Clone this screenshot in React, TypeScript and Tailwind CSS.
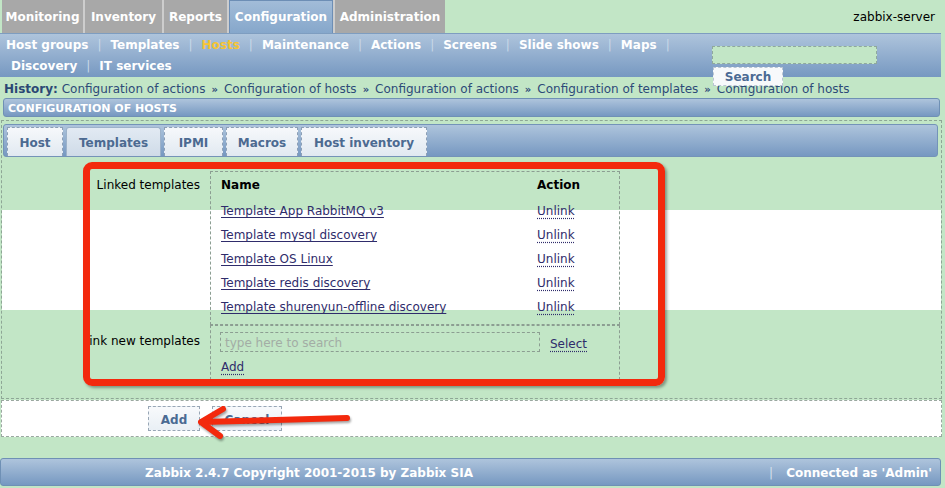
import React from "react";

const font = "font-['DejaVu_Sans',Verdana,sans-serif]";
const barBg = "bg-[linear-gradient(to_bottom,#aec4dc,#7698c1)]";

const mainTabs = [
  { label: "Monitoring", w: "w-[81px]" },
  { label: "Inventory", w: "w-[77px]" },
  { label: "Reports", w: "w-[63px]" },
  { label: "Configuration", w: "w-[104px]", active: true },
  { label: "Administration", w: "w-[110px]" },
];

const subMenu1 = ["Host groups", "Templates", "Hosts", "Maintenance", "Actions", "Screens", "Slide shows", "Maps"];
const subMenu2 = ["Discovery", "IT services"];

const history = [
  "Configuration of actions",
  "Configuration of hosts",
  "Configuration of actions",
  "Configuration of templates",
  "Configuration of hosts",
];

const formTabs = [
  { label: "Host", w: "w-[56px]" },
  { label: "Templates", w: "w-[95px]", active: true },
  { label: "IPMI", w: "w-[59px]" },
  { label: "Macros", w: "w-[72px]" },
  { label: "Host inventory", w: "w-[126px]" },
];

const templates = [
  "Template App RabbitMQ v3",
  "Template mysql discovery",
  "Template OS Linux",
  "Template redis discovery",
  "Template shurenyun-offline discovery",
];

function Sep() {
  return <span className="mx-[9px] font-normal text-[#c9d8e8]">|</span>;
}

function Menu({ items, last }: { items: string[]; last?: boolean }) {
  return (
    <>
      {items.map((item, i) => (
        <React.Fragment key={item}>
          <span className={item === "Hosts" ? "text-[#f7c434]" : "text-white"}>{item}</span>
          {(i < items.length - 1 || last) && <Sep />}
        </React.Fragment>
      ))}
    </>
  );
}

export default function App() {
  return (
    <div className={`relative w-[945px] h-[488px] overflow-hidden bg-[#c2e6c6] text-[12px] text-black ${font}`}>
      {/* main tabs */}
      <div className="flex h-[33px] items-start pl-[2px]">
        <div className="flex gap-[2px] bg-[#cdcdcd]">
          {mainTabs.map((t) => (
            <div
              key={t.label}
              className={`${t.w} h-[33px] flex items-center justify-center font-bold text-white ${
                t.active
                  ? "border border-b-0 border-[#6d8eb5] bg-[linear-gradient(to_bottom,#a2bcd8,#86a7cb)]"
                  : "bg-[#a8a8a8]"
              }`}
            >
              {t.label}
            </div>
          ))}
        </div>
        <div className="ml-auto mr-[10px] mt-[10px] leading-[14px]">zabbix-server</div>
      </div>

      {/* sub menu */}
      <div className={`relative w-[941px] h-[44px] border-t border-[#7e9dc0] ${barBg} pt-[1px] font-bold leading-[21px]`}>
        <div className="pl-[6px]">
          <Menu items={subMenu1} last />
        </div>
        <div className="pl-[11px]">
          <Menu items={subMenu2} />
        </div>
        <div className="absolute left-[712px] top-[12px] w-[165px] h-[18px] border border-dashed border-[#8fa89c] bg-[#c2e6c6]" />
        <div className="absolute z-10 left-[713px] top-[33px] w-[70px] h-[19px] border border-dashed border-[#b9c5d2] bg-[#f7f9fb] text-center text-[#4b6a93] leading-[19px]">
          Search
        </div>
      </div>

      {/* history */}
      <div className="h-[21px] pl-[4px] pt-[3px] leading-[18px] text-[#2d4a78]">
        <span className="font-bold text-[#2b4874]">History:</span>{" "}
        {history.map((h, i) => (
          <React.Fragment key={i}>
            <span>{h}</span>
            {i < history.length - 1 && <span className="mx-[6px] font-bold text-[10px]">»</span>}
          </React.Fragment>
        ))}
      </div>

      {/* page header */}
      <div className={`ml-[3px] w-[937px] h-[19px] rounded-[3px] border border-[#6f90b5] ${barBg} pl-[4px] text-[11px] font-bold leading-[19px] text-white`}>
        CONFIGURATION OF HOSTS
      </div>

      {/* form */}
      <div className="relative mt-[3px] ml-[1px] w-[941px] border border-dashed border-[#8ea696] pl-[1px] pt-[3px]">
        <div className={`w-[935px] h-[33px] rounded-[3px] border border-[#7493b8] ${barBg} flex items-end gap-[3px] pl-[3px]`}>
          {formTabs.map((t) => (
            <div
              key={t.label}
              className={`${t.w} h-[29px] pt-[2px] flex items-center justify-center font-bold text-[#4c6a91] ${
                t.active
                  ? "rounded-t-[3px] border border-b-0 border-[#9db2ca] bg-[linear-gradient(to_bottom,#e2eaf3,#cfdbe8)]"
                  : "border border-b-0 border-dashed border-[#8c9fb6] bg-[linear-gradient(to_bottom,#f6f8fb,#e1e9f1)]"
              }`}
            >
              {t.label}
            </div>
          ))}
        </div>

        <div className="h-[241px] -ml-[1px] pt-[14px] bg-[linear-gradient(to_bottom,#c2e6c6_53px,#ffffff_53px,#ffffff_153px,#c2e6c6_153px)]">
          {/* linked templates */}
          <div className="flex items-start">
            <div className="w-[198px] pt-[2px] text-right leading-[24px]">Linked templates</div>
            <div className="ml-[10px] w-[410px] border border-dashed border-[#8c9e92] pl-[10px] pb-[6px]">
              <div className="flex h-[24px] mb-[2px] leading-[26px] font-bold">
                <div className="w-[316px]">Name</div>
                <div>Action</div>
              </div>
              {templates.map((t) => (
                <div key={t} className="flex h-[24px] leading-[26px]">
                  <div className="w-[316px]">
                    <span className="text-[#2f2c6b] underline underline-offset-[2px]">{t}</span>
                  </div>
                  <div>
                    <span className="text-[#2f2c6b] underline decoration-dotted underline-offset-[3px]">Unlink</span>
                  </div>
                </div>
              ))}
            </div>
          </div>

          {/* link new templates */}
          <div className="flex items-start">
            <div className="w-[198px] pt-[4px] text-right leading-[24px]">Link new templates</div>
            <div className="ml-[10px] w-[410px] border border-dashed border-[#8c9e92] pl-[9px] pt-[5px]">
              <div className="flex items-center">
                <div className="w-[320px] h-[20px] border border-dashed border-[#8c9e92] pl-[4px] leading-[20px] text-[#a3ada5]">
                  type here to search
                </div>
                <span className="ml-[10px] mt-[4px] text-[#2f2c6b] underline decoration-dotted underline-offset-[3px]">Select</span>
              </div>
              <div className="mt-[2px] h-[24px] pl-[1px] leading-[25px]">
                <span className="text-[#2f2c6b] underline decoration-dotted underline-offset-[3px]">Add</span>
              </div>
            </div>
          </div>
        </div>

        {/* annotation box */}
        <div className="absolute left-[81px] top-[41px] w-[582px] h-[224px] rounded-[9px] border-[7px] border-[#f3290d] shadow-[2px_2px_3px_rgba(0,0,0,0.35)]" />
      </div>

      {/* buttons */}
      <div className="mt-[1px] ml-[1px] w-[941px] h-[37px] border border-dashed border-[#9aa8a0] bg-white flex pl-[146px] pt-[5px]">
        <div className="w-[52px] h-[25px] pt-[2px] border border-dashed border-[#98a6b5] bg-[linear-gradient(to_bottom,#f8fafc,#e9eff5)] text-center font-bold leading-[22px] text-[#4a6a93]">
          Add
        </div>
        <div className="ml-[12px] w-[70px] h-[25px] pt-[2px] border border-dashed border-[#98a6b5] bg-[linear-gradient(to_bottom,#f8fafc,#e9eff5)] text-center font-bold leading-[22px] text-[#4a6a93]">
          Cancel
        </div>
      </div>

      {/* footer */}
      <div className={`mt-[21px] w-[941px] h-[28px] rounded-[3px] border border-[#6f90b5] ${barBg} flex items-center pt-[2px] font-bold text-white`}>
        <div className="w-[616px] text-center">Zabbix 2.4.7 Copyright 2001-2015 by Zabbix SIA</div>
        <div className="flex-1 flex justify-end pr-[8px]">
          <span className="mr-[13px] font-normal text-[#d5e0ec]">|</span>
          <span>Connected as 'Admin'</span>
        </div>
      </div>

      {/* annotation arrow */}
      <svg
        className="absolute left-[195px] top-[398px] drop-shadow-[1px_2px_1px_rgba(0,0,0,0.35)]"
        width="160"
        height="44"
        viewBox="0 0 160 44"
      >
        <g stroke="#f3290d" strokeWidth="6" strokeLinecap="round" strokeLinejoin="round" fill="none">
          <path d="M7 24 L152 20" />
          <path d="M28 11 L6 24 L25 38" />
        </g>
      </svg>
    </div>
  );
}
